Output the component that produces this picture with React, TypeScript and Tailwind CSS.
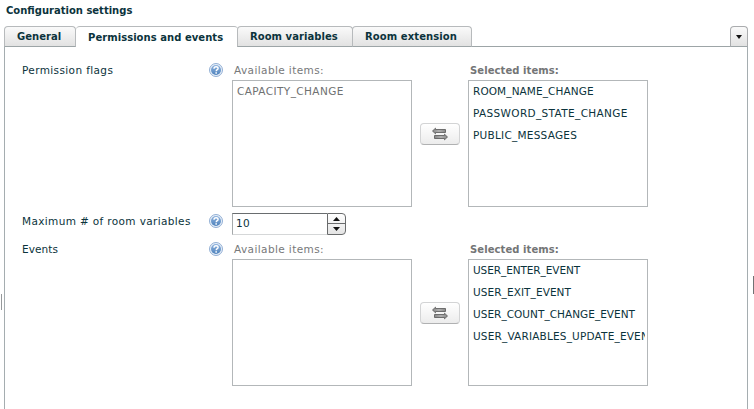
import React from "react";

function HelpIcon() {
  return (
    <svg width="14" height="14" viewBox="0 0 14 14" className="block shrink-0">
      <defs>
        <linearGradient id="help" x1="0" y1="0" x2="0" y2="1">
          <stop offset="0" stopColor="#8fb3de" />
          <stop offset="1" stopColor="#4f83bd" />
        </linearGradient>
      </defs>
      <circle cx="7" cy="7" r="6.5" fill="#eaf1f9" stroke="#86a6cf" strokeWidth="0.9" />
      <circle cx="7" cy="7" r="5" fill="url(#help)" />
      <path d="M5 5.7C5 4.3 5.9 3.7 7.1 3.7S9.1 4.4 9.1 5.4C9.1 6.6 7.2 6.7 7.2 8.2" fill="none" stroke="#fff" strokeWidth="1.4" />
      <rect x="6.4" y="9.2" width="1.5" height="1.5" fill="#fff" />
    </svg>
  );
}

function SwapButton() {
  return (
    <button className="mt-[43px] flex h-[22px] w-10 items-center justify-center rounded-[4px] border border-[#d3d4d5] border-b-[#b0b1b2] bg-linear-to-b from-white to-[#ececec]">
      <svg width="16" height="14" viewBox="0 0 16 14">
        <defs>
          <linearGradient id="arrow" x1="0" y1="0" x2="1" y2="0">
            <stop offset="0" stopColor="#888" />
            <stop offset="0.5" stopColor="#b0b0b0" />
            <stop offset="1" stopColor="#888" />
          </linearGradient>
        </defs>
        <path d="M0.5 4L3.5 1.2V2.5H13.5V5.5H3.5V6.8Z" fill="url(#arrow)" stroke="#555" strokeWidth="0.8" />
        <path d="M15.5 10L12.5 7.2V8.5H2.5V11.5H12.5V12.8Z" fill="url(#arrow)" stroke="#555" strokeWidth="0.8" />
      </svg>
    </button>
  );
}

type Item = { name: string; spacing: string };

function ListBox({ items, muted = false }: { items: Item[]; muted?: boolean }) {
  return (
    <div className={`mt-[3px] h-[127px] w-[180px] border border-[#b3b7b9] pr-[2px] pl-1 ${muted ? "text-[#6f7172]" : "text-[#0b333c]"}`}>
      <ul className="overflow-hidden">
        {items.map((item) => (
          <li key={item.name} className={`h-[22px] leading-[20px] whitespace-nowrap ${item.spacing}`}>{item.name}</li>
        ))}
      </ul>
    </div>
  );
}

function Picker({ available, selected }: { available: Item[]; selected: Item[] }) {
  return (
    <div className="flex text-[10.5px]">
      <div className="w-[180px]">
        <div className="h-[14px] pl-[2px] leading-[14px] tracking-[0.4px] text-[#77797a]">Available items:</div>
        <ListBox items={available} muted />
      </div>
      <div className="mx-2 pt-[17px]">
        <SwapButton />
      </div>
      <div className="w-[180px]">
        <div className="h-[14px] pl-[2px] text-[10px] leading-[16px] font-bold tracking-[0.08px] text-[#737576]">Selected items:</div>
        <ListBox items={selected} />
      </div>
    </div>
  );
}

function Label({ text, spacing }: { text: string; spacing: string }) {
  return (
    <div className="flex h-[14px] w-[210px] shrink-0 items-center">
      <span className={`h-[14px] w-[187px] text-[10.5px] leading-[14px] whitespace-nowrap ${spacing}`}>{text}</span>
      <HelpIcon />
    </div>
  );
}

function Stepper() {
  return (
    <div className="flex h-[22px] w-[114px]">
      <div className="w-[95px] border-t border-b border-l border-t-[#696d6f] border-b-[#d5d7d8] border-l-[#a5a9ab] pl-[3px] text-[10.5px] leading-[18px] tracking-[0.4px]">10</div>
      <div className="flex w-[19px] flex-col rounded-r-[4px] border border-[#696b6c] bg-linear-to-b from-white to-[#e4e4e4]">
        <div className="flex h-[10px] items-center justify-center border-b border-[#696b6c]">
          <svg width="7" height="4" viewBox="0 0 7 4"><path d="M0 4L3.5 0L7 4Z" fill="#111" /></svg>
        </div>
        <div className="flex h-[10px] items-center justify-center">
          <svg width="7" height="4" viewBox="0 0 7 4"><path d="M0 0H7L3.5 4Z" fill="#111" /></svg>
        </div>
      </div>
    </div>
  );
}

const permissionsAvailable: Item[] = [{ name: "CAPACITY_CHANGE", spacing: "tracking-[0.4px]" }];
const permissionsSelected: Item[] = [
  { name: "ROOM_NAME_CHANGE", spacing: "tracking-[0.1px]" },
  { name: "PASSWORD_STATE_CHANGE", spacing: "tracking-[0.35px]" },
  { name: "PUBLIC_MESSAGES", spacing: "tracking-[0.25px]" },
];
const eventsSelected: Item[] = [
  { name: "USER_ENTER_EVENT", spacing: "tracking-[-0.08px]" },
  { name: "USER_EXIT_EVENT", spacing: "tracking-[0.08px]" },
  { name: "USER_COUNT_CHANGE_EVENT", spacing: "tracking-[0.03px]" },
  { name: "USER_VARIABLES_UPDATE_EVENT", spacing: "tracking-[0.18px]" },
];

const inactiveTab =
  "h-[21px] rounded-t-[4px] border border-[#b7babc] border-b-[#9da5a7] bg-linear-to-b from-[#fafafa] to-[#e2e2e2] leading-[20px] whitespace-nowrap";

export default function App() {
  return (
    <div className="relative h-[409px] w-[754px] overflow-hidden bg-white font-['DejaVu_Sans',sans-serif] text-[10px] text-[#0b333c]">
      <h1 className="h-[26px] pl-[6px] leading-[21px] font-bold">Configuration settings</h1>
      <div className="flex h-[21px] pl-1 font-bold">
        <div className={`${inactiveTab} w-[72px] pl-3 tracking-[0.05px]`}>General</div>
        <div className="h-[21px] w-[162px] rounded-t-[4px] border-t border-[#b7babc] bg-white pl-3 leading-[22px] tracking-[0.05px] whitespace-nowrap">Permissions and events</div>
        <div className={`${inactiveTab} -ml-px w-[116px] pl-3 tracking-[0.05px]`}>Room variables</div>
        <div className={`${inactiveTab} -ml-px w-[120px] pl-3 tracking-[0.1px]`}>Room extension</div>
        <div className="w-[258px] border-b border-[#9da5a7]" />
        <div className="flex h-[21px] w-[18px] items-center justify-center rounded-t-[4px] border border-[#aaacae] border-b-[#9da5a7] bg-linear-to-b from-[#fafafa] to-[#e2e2e2]">
          <svg width="6" height="4" viewBox="0 0 6 4"><path d="M0 0H6L3 4Z" fill="#111" /></svg>
        </div>
      </div>
      <main className="ml-1 flex h-[362px] w-[744px] flex-col border-x border-[#a5adb0] pt-4 pl-[17px]">
        <section className="flex h-[150px]">
          <Label text="Permission flags" spacing="tracking-[0.38px]" />
          <Picker available={permissionsAvailable} selected={permissionsSelected} />
        </section>
        <section className="flex h-[29px]">
          <div className="pt-[1px]">
            <Label text="Maximum # of room variables" spacing="tracking-[0.36px]" />
          </div>
          <Stepper />
        </section>
        <section className="flex">
          <Label text="Events" spacing="tracking-[0.1px]" />
          <Picker available={[]} selected={eventsSelected} />
        </section>
      </main>
      <div className="absolute top-[294px] left-px h-4 w-px bg-[#96999b]" />
      <div className="absolute top-[276px] left-[753px] h-[18px] w-px bg-[#707274]" />
    </div>
  );
}
